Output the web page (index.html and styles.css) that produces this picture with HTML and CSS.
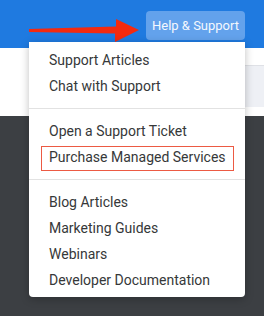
FILE: index.html
```html
<!DOCTYPE html>
<html lang="en">
<head>
  <meta charset="UTF-8">
  <meta name="viewport" content="width=device-width, initial-scale=1.0">
  <title>Help &amp; Support</title>
  <link rel="stylesheet" href="styles.css">
</head>
<body>
  <!-- Top bar -->
  <header class="topbar">
    <button class="help-btn" type="button">Help &amp; Support</button>
  </header>

  <!-- Page behind the menu -->
  <div class="subbar">
    <div class="subbar-strip"></div>
  </div>
  <div class="page"></div>

  <!-- Annotation arrow -->
  <svg class="arrow" width="264" height="50" viewBox="0 0 264 50">
    <polygon points="29,29 116,26.5 116,19 139,30 115,42 115,33.5 29,32" fill="#f42a0f"/>
  </svg>

  <!-- Dropdown -->
  <div class="menu">
    <ul class="menu-group">
      <li>Support Articles</li>
      <li>Chat with Support</li>
    </ul>
    <hr class="divider">
    <ul class="menu-group">
      <li>Open a Support Ticket</li>
      <li class="highlight">Purchase Managed Services</li>
    </ul>
    <hr class="divider">
    <ul class="menu-group">
      <li>Blog Articles</li>
      <li>Marketing Guides</li>
      <li>Webinars</li>
      <li>Developer Documentation</li>
    </ul>
  </div>
</body>
</html>
```

FILE: styles.css
```css
html, body {
  margin: 0;
  height: 100%;
}
body {
  font-family: Roboto, "Liberation Sans", Arial, sans-serif;
  background: #3c3f43;
  position: relative;
  overflow: hidden;
}
.topbar {
  height: 48px;
  background: #1f7ae0;
  display: flex;
  justify-content: flex-end;
  align-items: flex-start;
  padding: 11px 19px 0 0;
  box-sizing: border-box;
}
.help-btn {
  height: 29px;
  width: 99px;
  border: none;
  border-radius: 4px;
  background: #63a2ec;
  color: #f4f8fe;
  font-family: inherit;
  font-size: 13px;
  padding: 0;
}
.subbar {
  height: 68px;
  background: #fff;
  padding-top: 17px;
  box-sizing: border-box;
}
.subbar-strip {
  height: 42px;
  margin-left: 200px;
  background: #eef0f5;
  border-top: 1px solid #dfe1e6;
  box-sizing: border-box;
}
.arrow {
  position: absolute;
  left: 0;
  top: 0;
}
.menu {
  position: absolute;
  left: 29px;
  top: 42px;
  width: 216px;
  background: #fff;
  border-radius: 0 0 4px 4px;
  box-shadow: 0 2px 8px rgba(0, 0, 0, 0.25);
  padding: 5px 0 4px;
}
.menu-group {
  list-style: none;
  margin: 0;
  padding: 0;
}
.menu-group li {
  position: relative;
  height: 26px;
  line-height: 26px;
  padding-left: 20px;
  font-size: 14px;
  color: #363839;
  white-space: nowrap;
}
.menu-group li.highlight::after {
  content: "";
  position: absolute;
  left: 12px;
  right: 11px;
  top: 2px;
  bottom: -1px;
  border: 1px solid #ec5a43;
}
.divider {
  border: none;
  border-top: 1px solid #e2e2e2;
  margin: 9px 0;
}
```
